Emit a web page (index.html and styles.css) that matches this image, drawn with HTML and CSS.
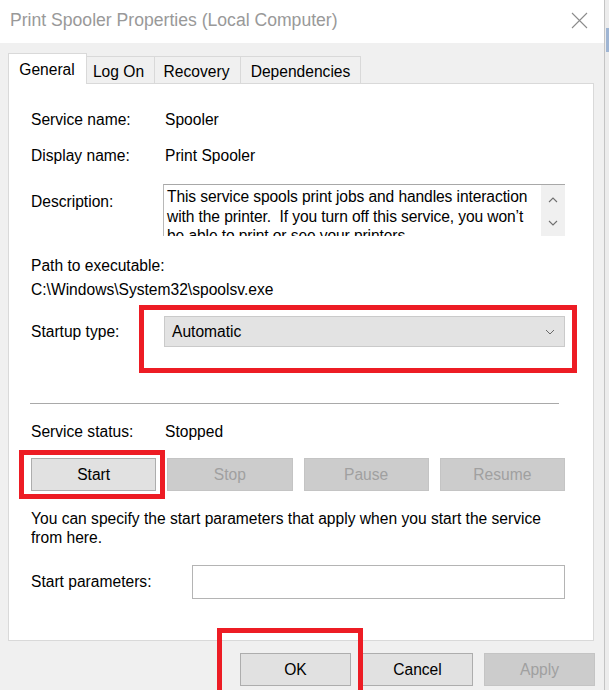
FILE: index.html
```html
<!DOCTYPE html>
<html lang="en">
<head>
<meta charset="utf-8">
<title>Print Spooler Properties (Local Computer)</title>
<link rel="stylesheet" href="styles.css">
</head>
<body>
<div class="screen">
  <div class="window">
    <div class="titlebar">
      <span class="title">Print Spooler Properties (Local Computer)</span>
      <svg class="close" width="17" height="17" viewBox="0 0 17 17" aria-hidden="true">
        <path d="M1 1 L16 16 M16 1 L1 16" stroke="#8c8c8c" stroke-width="1.1" fill="none"/>
      </svg>
    </div>
    <div class="dlg-body">
      <div class="tabs">
        <div class="tab tab-active">General</div>
        <div class="tab">Log On</div>
        <div class="tab">Recovery</div>
        <div class="tab">Dependencies</div>
      </div>
      <div class="panel">
        <div class="row r-service">
          <span class="label">Service name:</span>
          <span class="value">Spooler</span>
        </div>
        <div class="row r-display">
          <span class="label">Display name:</span>
          <span class="value">Print Spooler</span>
        </div>
        <div class="row r-desc">
          <span class="label label-desc">Description:</span>
          <div class="descbox">
            <div class="desctext">This service spools print jobs and handles interaction with the printer.&nbsp; If you turn off this service, you won’t be able to print or see your printers.</div>
            <div class="descscroll">
              <svg width="10" height="6" viewBox="0 0 10 6"><path d="M1 5 L5 1 L9 5" stroke="#707070" stroke-width="1.1" fill="none"/></svg>
              <svg width="10" height="6" viewBox="0 0 10 6"><path d="M1 1 L5 5 L9 1" stroke="#707070" stroke-width="1.1" fill="none"/></svg>
            </div>
          </div>
        </div>
        <div class="line r-pathlabel">Path to executable:</div>
        <div class="line r-path">C:\Windows\System32\spoolsv.exe</div>
        <div class="row r-startup">
          <span class="label label-startup">Startup type:</span>
          <div class="select-wrap">
            <div class="select">
              <span>Automatic</span>
              <svg width="10" height="6" viewBox="0 0 10 6"><path d="M1 1 L5 5 L9 1" stroke="#6a6a6a" stroke-width="1" fill="none"/></svg>
            </div>
            <span class="annot annot-startup"></span>
          </div>
        </div>
        <div class="separator"></div>
        <div class="row r-status">
          <span class="label">Service status:</span>
          <span class="value">Stopped</span>
        </div>
        <div class="btnrow">
          <div class="btn-wrap">
            <button class="btn">Start</button>
            <span class="annot annot-start"></span>
          </div>
          <div class="btn-wrap"><button class="btn btn-disabled">Stop</button></div>
          <div class="btn-wrap"><button class="btn btn-disabled">Pause</button></div>
          <div class="btn-wrap"><button class="btn btn-disabled">Resume</button></div>
        </div>
        <p class="hint">You can specify the start parameters that apply when you start the service from here.</p>
        <div class="row r-params">
          <span class="label label-params">Start parameters:</span>
          <div class="input"></div>
        </div>
      </div>
      <div class="footer">
        <div class="btn-wrap">
          <button class="btn fbtn">OK</button>
          <span class="annot annot-ok"></span>
        </div>
        <button class="btn fbtn">Cancel</button>
        <button class="btn fbtn btn-disabled">Apply</button>
      </div>
    </div>
  </div>
  <div class="edge"><div class="edge-blue"></div></div>
</div>
</body>
</html>
```
FILE: styles.css
```css
* { box-sizing: border-box; }

html, body {
  margin: 0;
  padding: 0;
  width: 609px;
  height: 690px;
  overflow: hidden;
  background: #f0f0f0;
}

body {
  font-family: "Liberation Sans", Arial, sans-serif;
  font-size: 15.6px;
  color: #000;
}

.screen {
  display: flex;
  width: 609px;
  height: 690px;
  overflow: hidden;
}

.window {
  width: 604px;
  height: 690px;
  display: flex;
  flex-direction: column;
  background: #f0f0f0;
}

.edge {
  width: 5px;
  height: 690px;
  background: #ececec;
  border-left: 1px solid #c4c4c4;
  padding-top: 28px;
}

.edge-blue {
  height: 24px;
  background: #9fb5d3;
  margin-left: 1px;
}

/* title bar */
.titlebar {
  height: 43px;
  background: #fff;
  display: flex;
  align-items: center;
  justify-content: space-between;
  padding: 0 16px 0 10px;
}

.title {
  font-size: 17.6px;
  color: #999;
  margin-top: -2px;
}

.close {
  margin-top: -3px;
}

/* body */
.dlg-body {
  flex: 1;
  padding: 10px 10px 0 8px;
}

.tabs {
  display: flex;
  align-items: flex-end;
  height: 30px;
  position: relative;
  z-index: 1;
}

.tab {
  height: 27px;
  padding: 5px 0 0;
  text-align: center;
  border: 1px solid #d9d9d9;
  border-bottom: none;
  border-left: none;
  background: #f0f0f0;
  line-height: 20px;
  white-space: nowrap;
}

.tab-active {
  height: 31px;
  margin-bottom: -1px;
  padding: 6px 1px 0 0;
  background: #fff;
  border-left: 1px solid #d9d9d9;
}

.tab:nth-child(2) { width: 68px; padding-right: 4px; }
.tab:nth-child(3) { width: 86px; padding-right: 2px; }
.tab:nth-child(4) { width: 120px; }
.tab-active { width: 79px; }

.panel {
  width: 586px;
  height: 558px;
  background: #fff;
  border: 1px solid #d9d9d9;
  padding: 26px 28px 0 22px;
}

.row {
  display: flex;
  align-items: flex-start;
  line-height: 20px;
}

.label {
  width: 134px;
  flex: none;
  white-space: nowrap;
}

.value {
  white-space: nowrap;
}

.r-display { margin-top: 16px; }

.r-desc { margin-top: 18px; }

.label-desc { margin-top: 8px; }

.descbox {
  margin-left: -2px;
  flex: 1;
  height: 52px;
  display: flex;
  border-top: 1px solid #a8a8a8;
  border-left: 1px solid #b8b8b8;
  overflow: hidden;
}

.desctext {
  flex: 1;
  padding: 2px 0 0 3px;
  line-height: 19.5px;
  letter-spacing: -0.1px;
}

.descscroll {
  width: 24px;
  background: #f0f0f0;
  display: flex;
  flex-direction: column;
  align-items: center;
  padding-top: 12px;
  gap: 17px;
}

.line {
  line-height: 20px;
  white-space: nowrap;
}

.r-pathlabel { margin-top: 20px; }
.r-path { margin-top: 4px; }

.r-startup { margin-top: 16px; }
.label-startup { margin-top: 6px; }

.select-wrap {
  position: relative;
  flex: 1;
  margin-left: -1px;
}

.select {
  height: 31px;
  background: #e3e3e3;
  border: 1px solid #cacaca;
  display: flex;
  align-items: center;
  justify-content: space-between;
  padding: 0 9px 0 7px;
}

.separator {
  height: 1px;
  background: #a9a9a9;
  margin: 56px 6px 0 -1px;
}

.r-status { margin-top: 18px; }

.btnrow {
  display: flex;
  gap: 11px;
  margin-top: 16px;
}

.btnrow .btn-wrap { flex: 1; }

.btn-wrap {
  position: relative;
}

.btn {
  font-family: inherit;
  font-size: 15.6px;
  color: #000;
  background: #e1e1e1;
  border: 1px solid #adadad;
  height: 33px;
  width: 100%;
  padding: 0;
  margin: 0;
  display: block;
}

.btn-disabled {
  background: #cccccc;
  border-color: #c4c4c4;
  color: #a0a0a0;
}

.hint {
  margin: 18px 0 0;
  line-height: 19px;
  padding-right: 20px;
}

.r-params { margin-top: 18px; }

.label-params {
  width: 161px;
  margin-top: 7px;
}

.input {
  flex: 1;
  height: 34px;
  border: 1px solid #b4b4b4;
  background: #fff;
}

/* footer */
.footer {
  display: flex;
  justify-content: flex-end;
  gap: 11px;
  margin-top: 12px;
  margin-right: -1px;
}

.fbtn {
  width: 111px;
  height: 33px;
}

.footer .btn-wrap { width: 111px; }

/* red annotation frames */
.annot {
  position: absolute;
  border: 5px solid #ed1c24;
  pointer-events: none;
}

.annot-startup {
  left: -25px;
  right: -12px;
  top: -11px;
  bottom: -26px;
}

.annot-start {
  left: -12px;
  right: -9px;
  top: -8px;
  bottom: -8px;
}

.annot-ok {
  left: -23px;
  right: -12px;
  top: -25px;
  bottom: -16px;
}
```
